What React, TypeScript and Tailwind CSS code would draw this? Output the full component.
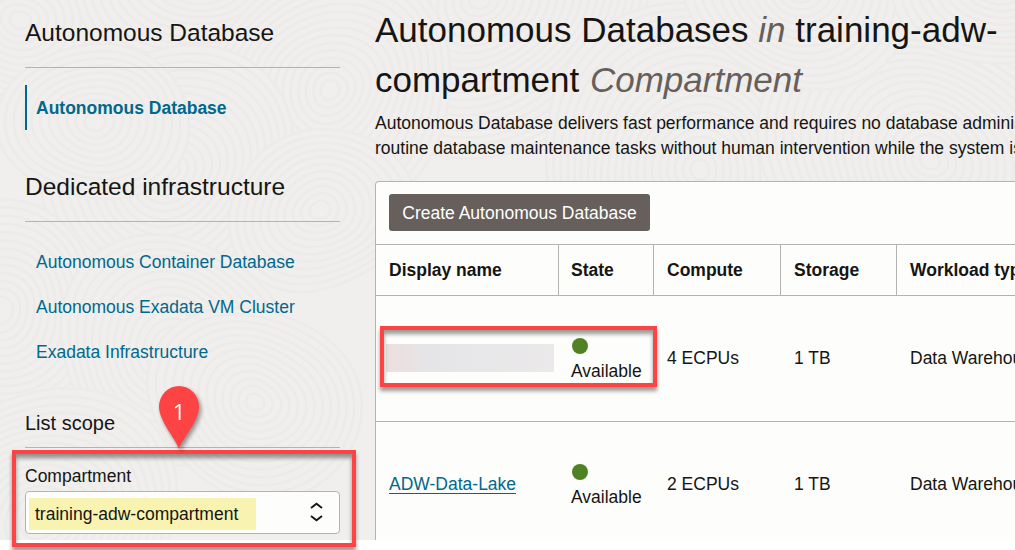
import type { ReactNode } from "react";

type Ring = { x: number; y: number; r: number; seed: number };

const rings: Ring[] = [
  { x: 20, y: 20, r: 130, seed: 1 },
  { x: 200, y: -30, r: 120, seed: 2 },
  { x: 480, y: 0, r: 170, seed: 3 },
  { x: 330, y: 90, r: 130, seed: 4 },
  { x: 700, y: 170, r: 170, seed: 5 },
  { x: 930, y: 160, r: 170, seed: 6 },
  { x: 800, y: -10, r: 110, seed: 7 },
  { x: 1000, y: -20, r: 100, seed: 8 },
  { x: 170, y: 170, r: 130, seed: 10 },
  { x: 320, y: 210, r: 90, seed: 9 },
  { x: 0, y: 310, r: 110, seed: 11 },
  { x: 175, y: 350, r: 120, seed: 12 },
  { x: 95, y: 122, r: 90, seed: 14 },
  { x: 40, y: 520, r: 140, seed: 16 },
  { x: 255, y: 402, r: 105, seed: 19 },
];

function ringPath(ring: Ring, radius: number) {
  const points: string[] = [];
  for (let i = 0; i < 64; i++) {
    const a = (i / 64) * Math.PI * 2;
    const k = 1 + 0.07 * Math.sin(2 * a + ring.seed) + 0.03 * Math.sin(3 * a + ring.seed * 2 + radius / 40);
    points.push(`${(ring.x + Math.cos(a) * radius * k).toFixed(1)} ${(ring.y + Math.sin(a) * radius * k * 0.92).toFixed(1)}`);
  }
  return `M${points.join("L")}Z`;
}

function Texture() {
  return (
    <svg className="pointer-events-none absolute inset-0" width="1015" height="540" aria-hidden="true">
      {rings.map((ring) => (
        <g key={ring.seed} fill="#f0efed" stroke="#ecebe9" strokeWidth="2.6">
          {Array.from({ length: Math.floor(ring.r / 8) }, (_, i) => (
            <path key={i} d={ringPath(ring, ring.r - i * 8)} />
          ))}
        </g>
      ))}
    </svg>
  );
}

function NavLink({ children }: { children: ReactNode }) {
  return (
    <a href="#" className="flex h-[45px] items-center pt-0.5 pl-[11px] text-[#00688c]">
      {children}
    </a>
  );
}

function Sidebar() {
  return (
    <nav className="w-[315px] shrink-0">
      <h2 className="h-[68px] border-b border-[#b5b3b0] pt-[14px] text-[24.5px] leading-[37px]">Autonomous Database</h2>
      <a href="#" className="mt-[17px] flex h-[45px] items-center border-l-2 border-[#00688c] pt-0.5 pl-[9px] font-bold text-[#00688c]">
        Autonomous Database
      </a>
      <h2 className="mt-[38px] h-[54px] border-b border-[#b5b3b0] text-[24.5px] leading-[37px]">Dedicated infrastructure</h2>
      <div className="mt-[17px]">
        <NavLink>Autonomous Container Database</NavLink>
        <NavLink>Autonomous Exadata VM Cluster</NavLink>
        <NavLink>Exadata Infrastructure</NavLink>
      </div>
      <h3 className="mt-[34px] h-[40px] border-b border-[#b5b3b0] text-[20px] leading-[30px]">List scope</h3>
      <label className="mt-[16px] block leading-[25px]">Compartment</label>
      <button className="mt-[2px] flex h-[43px] w-full items-center justify-between rounded-[4px] border border-[#b5b3b0] bg-[#fdfdfb] pr-[16px] pl-[3px]">
        <span className="mt-[3px] flex h-8 w-[227px] items-center bg-[#f8f3b1] pl-[6px]">training-adw-compartment</span>
        <svg className="mb-px" width="13" height="20" viewBox="0 0 13 20" fill="none" stroke="#161513" strokeWidth="1.9">
          <path d="M1 6 6.5 1.8 12 6M1 14 6.5 18.2 12 14" />
        </svg>
      </button>
    </nav>
  );
}

const columns = "grid grid-cols-[183px_95px_127px_116px_200px]";

const databases = [
  { name: "", compute: "4 ECPUs" },
  { name: "ADW-Data-Lake", compute: "2 ECPUs" },
];

function DatabaseTable() {
  return (
    <section className="mt-[20px] w-[760px] rounded-tl-[4px] border border-b-0 border-[#b5b3b0] bg-[#fdfdfb]">
      <div className="flex h-[63px] items-center border-b border-[#b5b3b0] pl-[13px]">
        <button className="mb-px h-[37px] w-[261px] rounded-[3px] bg-[#665f5b] pt-px text-white">Create Autonomous Database</button>
      </div>
      <div className={`${columns} h-[51px] border-b border-[#b5b3b0] font-bold`}>
        {["Display name", "State", "Compute", "Storage", "Workload type"].map((title) => (
          <div key={title} className={`flex items-center border-r border-[#b5b3b0] ${title === "State" ? "pl-[12px]" : "pl-[13px]"}`}>
            {title}
          </div>
        ))}
      </div>
      {databases.map((db) => (
        <div key={db.compute} className={`${columns} h-[126px] items-center border-b border-[#b5b3b0]`}>
          {db.name ? (
            <a href="#" className="ml-[13px] w-fit border-b border-[#00688c] leading-[18px] text-[#00688c]">
              {db.name}
            </a>
          ) : (
            <div className="mb-[2px] ml-[10px] h-7 w-[168px] bg-linear-to-r from-[#eedede] via-[#e5e5e7] via-25% to-[#ebe9ea]" />
          )}
          <div className="pt-[4px] pl-[12px]">
            <div className="ml-px h-4 w-4 rounded-full bg-[#508223]" />
            <div className="mt-[5px] leading-[25px]">Available</div>
          </div>
          <div className="pl-[13px]">{db.compute}</div>
          <div className="pl-[13px]">1 TB</div>
          <div className="pl-[13px] whitespace-nowrap">Data Warehouse</div>
        </div>
      ))}
    </section>
  );
}

function Marker() {
  return (
    <div className="absolute top-[386px] left-[159px] h-[64px] w-[40px] drop-shadow-[2px_3px_2px_rgba(0,0,0,0.4)]">
      <svg className="absolute inset-0" width="40" height="64" viewBox="0 0 40 64">
        <path d="M20 63C15.5 51 0 35 0 20.5A20 20.5 0 0 1 40 20.5C40 35 24.5 51 20 63Z" fill="#fd4344" />
      </svg>
      <span className="absolute inset-x-0 top-[10px] text-center font-['Open_Sans',sans-serif] text-[22px] leading-[30px] font-medium text-white">1</span>
    </div>
  );
}

export default function App() {
  return (
    <div className="relative h-[550px] w-[1015px] overflow-hidden bg-white font-['Liberation_Sans',Arial,sans-serif] text-[17.5px] leading-[25px] text-[#161513]">
      <div className="relative h-[540px] overflow-hidden bg-[#f0efed]">
        <Texture />
        <div className="relative flex gap-[35px] pl-[25px]">
          <Sidebar />
          <main className="w-[760px] shrink-0 pt-[5px]">
            <h1 className="text-[35px] leading-[50px]">
              Autonomous Databases <em className="text-[#665f5b]">in</em> training-adw-
              <br />
              compartment <em className="ml-px text-[#665f5b]">Compartment</em>
            </h1>
            <p className="mt-[6px] whitespace-nowrap">
              Autonomous Database delivers fast performance and requires no database administration.
              <br />
              routine database maintenance tasks without human intervention while the system is running.
            </p>
            <DatabaseTable />
          </main>
        </div>
      </div>
      <div className="absolute top-[450px] left-[12px] h-[97px] w-[344px] border-4 border-[#fd4344] shadow-[0_4px_4px_rgba(0,0,0,0.4),inset_0_4px_4px_rgba(0,0,0,0.4)]" />
      <div className="absolute top-[326px] left-[380px] h-[61px] w-[277px] border-4 border-[#fd4344] shadow-[0_4px_4px_rgba(0,0,0,0.4),inset_0_4px_4px_rgba(0,0,0,0.4)]" />
      <Marker />
    </div>
  );
}
